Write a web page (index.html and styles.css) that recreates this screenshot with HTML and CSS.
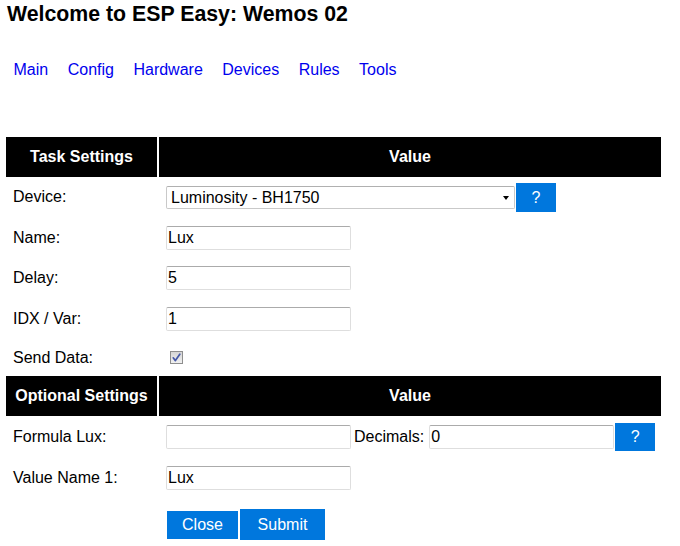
FILE: index.html
```html
<!DOCTYPE html>
<html>
<head>
<meta charset="utf-8">
<title>ESP Easy</title>
<link rel="stylesheet" href="styles.css">
</head>
<body>
<h1 class="title">Welcome to ESP Easy: Wemos 02</h1>
<nav class="menu">
  <a class="menu-link" href="#">Main</a>
  <a class="menu-link" href="#">Config</a>
  <a class="menu-link" href="#">Hardware</a>
  <a class="menu-link" href="#">Devices</a>
  <a class="menu-link" href="#">Rules</a>
  <a class="menu-link" href="#">Tools</a>
</nav>
<table class="settings">
  <tr class="head">
    <th class="col-label">Task Settings</th>
    <th class="col-value">Value</th>
  </tr>
  <tr class="row">
    <td class="label">Device:</td>
    <td class="value"><div class="field"><span class="select-wrap"><select class="select"><option>Luminosity - BH1750</option></select></span><a class="help help-tall" href="#">?</a></div></td>
  </tr>
  <tr class="row">
    <td class="label">Name:</td>
    <td class="value"><div class="field"><input class="text" type="text" value="Lux"></div></td>
  </tr>
  <tr class="row">
    <td class="label">Delay:</td>
    <td class="value"><div class="field"><input class="text" type="text" value="5"></div></td>
  </tr>
  <tr class="row">
    <td class="label">IDX / Var:</td>
    <td class="value"><div class="field"><input class="text" type="text" value="1"></div></td>
  </tr>
  <tr class="row-check">
    <td class="label">Send Data:</td>
    <td class="value"><div class="field"><span class="checkbox"><svg width="13" height="13" viewBox="0 0 13 13"><defs><linearGradient id="cb" x1="0" y1="0" x2="0" y2="1"><stop offset="0" stop-color="#d4d4d4"/><stop offset="1" stop-color="#f2f2f2"/></linearGradient></defs><rect x="0.5" y="0.5" width="12" height="12" fill="url(#cb)" stroke="#8e8e8e"/><path d="M3.2 6.8 L5.4 9.6 L9.8 3.2" fill="none" stroke="#4558a8" stroke-width="1.7" stroke-linejoin="round" stroke-linecap="round"/></svg></span></div></td>
  </tr>
  <tr class="head">
    <th class="col-label">Optional Settings</th>
    <th class="col-value">Value</th>
  </tr>
  <tr class="row row-optional">
    <td class="label">Formula Lux:</td>
    <td class="value"><div class="field"><input class="text" type="text" value=""><span class="inline-label">Decimals:</span><input class="text" type="text" value="0"><a class="help" href="#">?</a></div></td>
  </tr>
  <tr class="row row-optional">
    <td class="label">Value Name 1:</td>
    <td class="value"><div class="field"><input class="text" type="text" value="Lux"></div></td>
  </tr>
  <tr class="row-buttons">
    <td class="label"></td>
    <td class="value"><div class="field actions"><a class="button button-close" href="#">Close</a><button class="button button-submit" type="button">Submit</button></div></td>
  </tr>
</table>
</body>
</html>
```
FILE: styles.css
```css
html, body {
  margin: 0;
  padding: 0;
  background: #fff;
}

body {
  font-family: "Liberation Sans", Arial, sans-serif;
  font-size: 16px;
  color: #000;
}

.title {
  margin: 0;
  padding: 2px 0 0 7px;
  font-size: 21.3px;
  line-height: 24px;
  font-weight: bold;
}

.menu {
  display: flex;
  gap: 19.5px;
  margin-top: 35px;
  padding-left: 13.5px;
  line-height: 18px;
}

.menu-link {
  color: #0000ee;
  text-decoration: none;
}

.settings {
  margin: 58px 0 0 4px;
  width: 659px;
  table-layout: fixed;
  border-collapse: separate;
  border-spacing: 2px 0;
}

.head th {
  height: 40px;
  padding: 0;
  background: #000;
  color: #fff;
  font-weight: bold;
  text-align: center;
  vertical-align: middle;
}

.col-label {
  width: 151px;
}

.row td {
  height: 40.5px;
}

.row-optional td {
  height: 41.5px;
}

.row-check td {
  height: 37px;
}

.row-buttons td {
  height: 51px;
}

.label,
.value {
  padding: 0 0 0 7px;
  vertical-align: middle;
  text-align: left;
}

.field {
  display: flex;
  align-items: center;
}

.select-wrap {
  position: relative;
  display: inline-block;
}

.select-wrap::after {
  content: "";
  position: absolute;
  right: 6px;
  top: 10px;
  border-left: 3px solid transparent;
  border-right: 3px solid transparent;
  border-top: 4px solid #000;
  pointer-events: none;
}

.select {
  -webkit-appearance: none;
  appearance: none;
  box-sizing: border-box;
  width: 349px;
  height: 23px;
  margin: 0;
  padding: 0 0 0 4px;
  border: 1px solid #c9c9c9;
  border-top-color: #b0b0b0;
  border-radius: 2px;
  background: #fff;
  font-family: "Liberation Sans", Arial, sans-serif;
  font-size: 16px;
  color: #000;
  display: block;
}

.text {
  box-sizing: border-box;
  width: 185px;
  height: 24px;
  margin: 0;
  padding: 0 1px;
  border: 1px solid #dedede;
  border-top-color: #ababab;
  border-radius: 2px;
  background: #fff;
  font-family: "Liberation Sans", Arial, sans-serif;
  font-size: 16px;
  color: #000;
  outline: none;
}

.inline-label {
  margin: 0 5px 0 3px;
}

.help {
  display: inline-block;
  box-sizing: border-box;
  width: 40px;
  height: 28px;
  line-height: 28px;
  margin-left: 1px;
  background: #0077dd;
  color: #fff;
  text-align: center;
  text-decoration: none;
}

.help-tall {
  height: 29px;
  line-height: 29px;
}

.checkbox {
  display: inline-block;
  width: 13px;
  height: 13px;
  margin-left: 4px;
}

.checkbox svg {
  display: block;
}

.actions {
  gap: 2px;
  padding-left: 1px;
}

.button {
  box-sizing: border-box;
  display: inline-block;
  margin: 0;
  border: 0;
  background: #0077dd;
  color: #fff;
  font-family: "Liberation Sans", Arial, sans-serif;
  font-size: 16px;
  text-decoration: none;
  text-align: center;
}

.button-close {
  width: 71px;
  height: 28px;
  line-height: 28px;
}

.button-submit {
  width: 85px;
  height: 31px;
  line-height: 31px;
  padding: 0;
}
```
